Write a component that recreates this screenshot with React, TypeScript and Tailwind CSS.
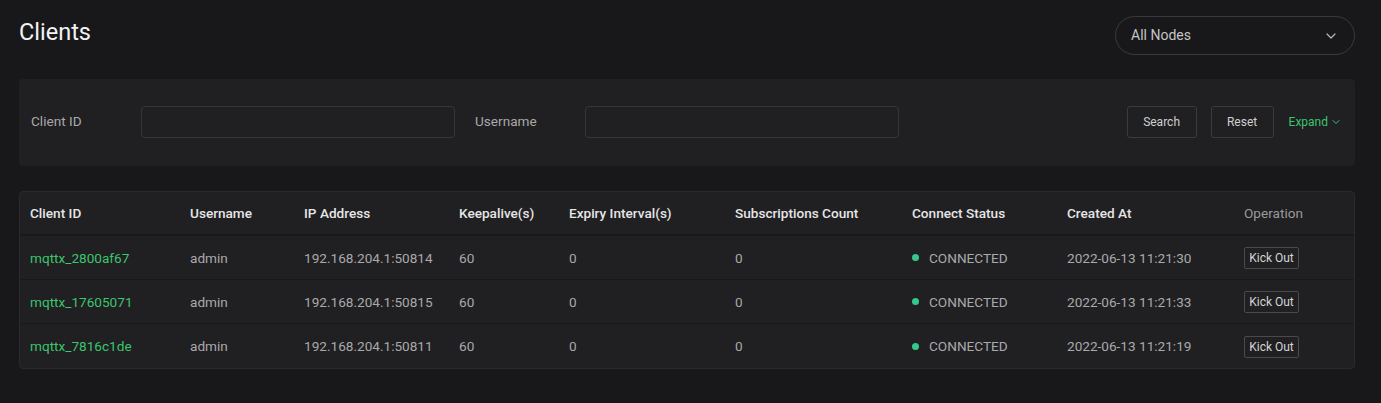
import { ChevronDown } from "lucide-react";

type Client = {
  id: string;
  username: string;
  ip: string;
  keepalive: number;
  expiry: number;
  subs: number;
  createdAt: string;
};

const clients: Client[] = [
  { id: "mqttx_2800af67", username: "admin", ip: "192.168.204.1:50814", keepalive: 60, expiry: 0, subs: 0, createdAt: "2022-06-13 11:21:30" },
  { id: "mqttx_17605071", username: "admin", ip: "192.168.204.1:50815", keepalive: 60, expiry: 0, subs: 0, createdAt: "2022-06-13 11:21:33" },
  { id: "mqttx_7816c1de", username: "admin", ip: "192.168.204.1:50811", keepalive: 60, expiry: 0, subs: 0, createdAt: "2022-06-13 11:21:19" },
];

const cols = "grid grid-cols-[160px_114px_155px_110px_166px_177px_155px_177px_1fr] px-[10px]";

export default function App() {
  return (
    <div className="min-h-[403px] w-full bg-[#18181a] pl-[19px] pr-[26px] pt-[16px] font-['Roboto',sans-serif] text-[13.6px]">
      <div className="flex items-start justify-between">
        <h1 className="pt-[1px] text-[23.5px] leading-[30px] text-[#f2f2f2]">Clients</h1>
        <button className="flex h-[39px] w-[240px] items-center justify-between rounded-full border border-[#3a3a3d] px-[15px] text-[14px] text-[#c4c4c4]">
          <span>All Nodes</span>
          <ChevronDown size={16} strokeWidth={1.8} className="text-[#b8b8b8]" />
        </button>
      </div>

      <div className="mt-[24px] flex h-[87px] items-center rounded-[4px] bg-[#201f21] pl-[12px] pr-[13px]">
        <label className="-mt-[2px] w-[110px] text-[#a9a9ab]">Client ID</label>
        <input className="-mt-[2px] h-[32px] w-[314px] rounded-[4px] border border-[#363538] bg-transparent outline-none" />
        <label className="-mt-[2px] ml-[20px] w-[110px] text-[#a9a9ab]">Username</label>
        <input className="-mt-[2px] h-[32px] w-[314px] rounded-[4px] border border-[#363538] bg-transparent outline-none" />
        <div className="-mt-[2px] ml-auto flex items-center">
          <button className="h-[32px] w-[70px] rounded-[3px] border border-[#3b3a3e] text-[12px] text-[#d0d0d0]">Search</button>
          <button className="ml-[14px] h-[32px] w-[63px] rounded-[3px] border border-[#3b3a3e] text-[12px] text-[#d0d0d0]">Reset</button>
          <button className="ml-[15px] flex items-center gap-[2px] text-[12px] text-[#3bc56e]">
            Expand
            <ChevronDown size={12} strokeWidth={2} />
          </button>
        </div>
      </div>

      <div className="mt-[25px] overflow-hidden rounded-[4px] border border-[#2a292c] bg-[#201f21]">
        <div className={`${cols} h-[44px] items-center border-b-2 border-[#19191b] pt-[1px] font-medium text-[#e6e6e6]`}>
          <div>Client ID</div>
          <div>Username</div>
          <div>IP Address</div>
          <div>Keepalive(s)</div>
          <div>Expiry Interval(s)</div>
          <div>Subscriptions Count</div>
          <div>Connect Status</div>
          <div>Created At</div>
          <div className="font-normal text-[#9a9a9c]">Operation</div>
        </div>
        {clients.map((c, i) => (
          <div
            key={c.id}
            className={`${cols} h-[44px] items-center pt-[1px] text-[#a9a9ab] ${i < clients.length - 1 ? "border-b border-[#19191b]" : ""}`}
          >
            <div className="text-[#3bc56e]">{c.id}</div>
            <div>{c.username}</div>
            <div>{c.ip}</div>
            <div>{c.keepalive}</div>
            <div>{c.expiry}</div>
            <div>{c.subs}</div>
            <div className="flex items-center gap-[10px]">
              <span className="h-[7px] w-[7px] rounded-full bg-[#34c98a]" />
              CONNECTED
            </div>
            <div>{c.createdAt}</div>
            <div>
              <button className="h-[22px] w-[55px] rounded-[2px] border border-[#4a494d] text-[12px] text-[#d4d4d4]">Kick Out</button>
            </div>
          </div>
        ))}
      </div>
    </div>
  );
}
